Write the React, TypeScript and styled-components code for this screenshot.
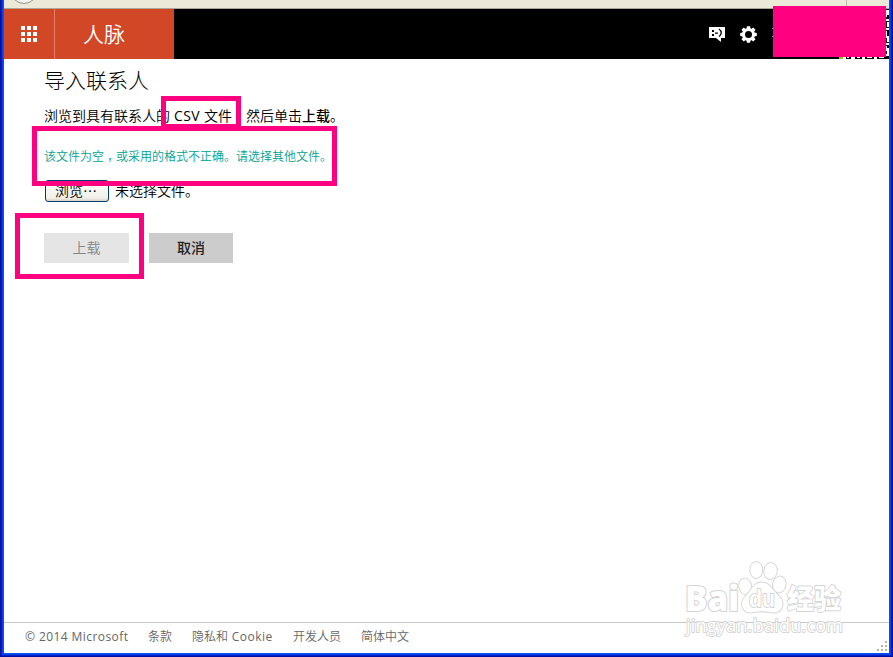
import React from "react";
import styled, { createGlobalStyle, css } from "styled-components";

const GlobalStyle = createGlobalStyle`
  *, *::before, *::after { box-sizing: border-box; }
  body {
    margin: 0;
    overflow: hidden;
    background: #fff;
    font-family: "Open Sans", "Noto Sans CJK SC", sans-serif;
  }
`;

const WindowFrame = styled.div`
  position: relative;
  display: flex;
  flex-direction: column;
  width: 893px;
  height: 657px;
  padding: 0 4px 4px;
  background: #fff;
  &::after {
    content: "";
    position: absolute;
    inset: -4px 0 0;
    pointer-events: none;
    box-shadow: inset 0 0 0 1px #0010a4, inset 0 0 0 2px #0020c8, inset 0 0 0 3px #0840e8,
      inset 0 0 0 4px #0850f0;
  }
`;

const BrowserChrome = styled.div`
  display: flex;
  justify-content: space-between;
  flex: 0 0 9px;
  overflow: hidden;
  background: #ece9d8;
  border-bottom: 1px solid #aaa796;
`;

const BackButtonEdge = styled.svg`
  display: block;
  width: 50px;
  height: 8px;
`;

const ChromeDivider = styled.span`
  width: 1px;
  height: 6px;
  margin-right: 42px;
  background: #bdb9a8;
`;

const Header = styled.header`
  display: flex;
  flex: 0 0 50px;
  background: #000;
`;

const AppLauncher = styled.button`
  display: grid;
  place-items: center;
  width: 51px;
  height: 50px;
  padding: 0;
  border: 0;
  border-right: 1px solid #e28067;
  background: #d24726;
`;

const AppName = styled.div`
  width: 119px;
  padding-left: 28px;
  background: #d24726;
  color: #fff;
  font-size: 21px;
  font-weight: 350;
  line-height: 50px;
`;

const HeaderTools = styled.div`
  display: flex;
  align-items: center;
  gap: 14px;
  margin-left: auto;
  padding-right: 132px;
`;

const Icon = styled.svg`
  display: block;
`;

const Content = styled.main`
  display: flex;
  flex-direction: column;
  flex: 1;
  padding: 6px 40px 0;
  white-space: pre;
`;

const Title = styled.h1`
  margin: 0;
  font-size: 21px;
  font-weight: 300;
  line-height: 30px;
`;

const Instruction = styled.p`
  display: flex;
  margin: 11px 0 0;
  font-size: 14px;
  font-weight: 350;
  line-height: 20px;
`;

const FileType = styled.span`
  display: inline-block;
  width: 76px;
  padding-left: 4px;
`;

const Latin = styled.span<{ $spacing?: number }>`
  font-weight: 400;
  letter-spacing: ${(p) => p.$spacing ?? 0}px;
`;

const Strong = styled.b`
  font-weight: 500;
`;

const CenteredComma = styled.span`
  display: inline-block;
  width: 12px;
  text-indent: 3px;
`;

const ErrorText = styled.p`
  margin: 21px 0 0;
  color: #00a294;
  font-size: 12px;
  font-weight: 350;
  line-height: 20px;
`;

const FileRow = styled.div`
  display: flex;
  align-items: center;
  gap: 6px;
  height: 24px;
  margin-top: 12px;
  padding-left: 1px;
  font-size: 14px;
  font-weight: 350;
  line-height: 20px;
`;

const BrowseButton = styled.button`
  width: 64px;
  height: 22px;
  padding: 0 2px 2px 0;
  border: 1px solid #003c74;
  border-radius: 3px;
  background: linear-gradient(#fff, #f1f0e8 85%, #d8d0c4);
  font: 350 14px/18px "Noto Sans CJK SC", sans-serif;
  color: #000;
`;

const Actions = styled.div`
  display: flex;
  gap: 20px;
  margin-top: 30px;
`;

const ActionButton = styled.button<{ $muted?: boolean }>`
  width: 84px;
  height: 30px;
  padding: 0 0 2px;
  border: 0;
  background: #ccc;
  color: #222;
  font: 500 14px/28px "Noto Sans CJK SC", sans-serif;
  ${(p) =>
    p.$muted &&
    css`
      width: 85px;
      background: #e5e5e5;
      color: #858585;
      font-weight: 350;
    `}
`;

const Footer = styled.footer`
  display: flex;
  flex: 0 0 31px;
  padding-left: 21px;
  border-top: 1px solid #c8c8c8;
  color: #666;
  font-size: 12px;
  font-weight: 350;
  line-height: 27px;
  white-space: pre;
`;

const FooterItem = styled.span<{ $width: number }>`
  width: ${(p) => p.$width}px;
`;

const Overlay = styled.div<{ $x: number; $y: number; $w: number; $h: number }>`
  position: absolute;
  z-index: 2;
  left: ${(p) => p.$x}px;
  top: ${(p) => p.$y}px;
  width: ${(p) => p.$w}px;
  height: ${(p) => p.$h}px;
  pointer-events: none;
`;

const Highlight = styled(Overlay)`
  border: 5px solid #ff0080;
`;

const Redaction = styled(Overlay)`
  background: #ff0080;
`;

const Watermark = () => (
  <Overlay $x={680} $y={555} $w={170} $h={85}>
    <Icon width="170" height="85" viewBox="0 0 170 85">
      <g fill="#fff" stroke="#d4d4d4" strokeWidth="2.2" paintOrder="stroke" strokeLinejoin="round">
        <text x="5" y="56" fontFamily="Open Sans, sans-serif" fontSize="36" fontWeight="800" textLength="54" lengthAdjust="spacingAndGlyphs">
          Bai
        </text>
        <g strokeWidth="1.8">
          <ellipse cx="65.3" cy="31.5" rx="6" ry="8" transform="rotate(-12 65.3 31.5)" />
          <ellipse cx="76.3" cy="15" rx="6" ry="8" />
          <ellipse cx="90.5" cy="16" rx="6.3" ry="8" transform="rotate(8 90.5 16)" />
          <ellipse cx="99.3" cy="29.5" rx="6.3" ry="8" transform="rotate(12 99.3 29.5)" />
          <path d="M82 27.5C89 27.5 91 33 96 38C101 43 104 46 102 52C100 58 94 58 90 57C84 56 80 56 74 57C67 59 62 55 62 49C62 43 67 40 70 36C73 32 75 27.5 82 27.5Z" />
        </g>
        <text x="69" y="52" fontFamily="Liberation Sans, sans-serif" fontSize="24" fontWeight="700" textLength="26" lengthAdjust="spacingAndGlyphs" stroke="#c8c8c8" strokeWidth="1.5">
          du
        </text>
        <text x="107" y="54" fontSize="27" fontWeight="900" fontFamily="Noto Sans CJK SC, sans-serif" textLength="54" strokeWidth="1.8">
          经验
        </text>
        <text x="6" y="77" fontSize="18" fontFamily="Open Sans, sans-serif" strokeWidth="1.8" textLength="157">
          jingyan.baidu.com
        </text>
      </g>
    </Icon>
  </Overlay>
);

const dots = [0, 6, 12];

export default function App() {
  return (
    <>
      <GlobalStyle />
      <WindowFrame>
        <BrowserChrome>
          <BackButtonEdge viewBox="0 0 50 8">
            <circle cx="20" cy="-10" r="13.5" fill="#f4f3ee" stroke="#929292" />
          </BackButtonEdge>
          <ChromeDivider />
        </BrowserChrome>
        <Header>
          <AppLauncher aria-label="应用">
            <Icon width="16" height="16" viewBox="0 0 16 16">
              {dots.map((y) => dots.map((x) => <rect key={`${x}-${y}`} x={x} y={y} width="4" height="4" fill="#fff" />))}
            </Icon>
          </AppLauncher>
          <AppName>人脉</AppName>
          <HeaderTools>
            <Icon width="17" height="16" viewBox="0 0 17 16">
              <path d="M0 1H16V12H12V16L7 12H0Z" fill="#fff" />
              <path d="M3 4h2v2H3zM3 8h2v2H3zM6 6.5h3v1.2H6z" fill="#000" />
              <path d="M10 3Q14.5 6.5 10 10.5" fill="none" stroke="#000" strokeWidth="1.3" />
            </Icon>
            <Icon width="17" height="17" viewBox="-8.5 -8.5 17 17">
              <circle r="5" fill="none" stroke="#fff" strokeWidth="3" />
              {[0, 45, 90, 135, 180, 225, 270, 315].map((a) => (
                <path key={a} d="M-2 -5.5L-1.6 -8.3H1.6L2 -5.5Z" fill="#fff" transform={`rotate(${a})`} />
              ))}
            </Icon>
          </HeaderTools>
        </Header>
        <Content>
          <Title>导入联系人</Title>
          <Instruction>
            浏览到具有联系人的
            <FileType>
              <Latin $spacing={0.4}>CSV </Latin>文件
            </FileType>
            然后单击<Strong>上载</Strong>。
          </Instruction>
          <ErrorText>
            该文件为空<CenteredComma>，</CenteredComma>或采用的格式不正确。请选择其他文件。
          </ErrorText>
          <FileRow>
            <BrowseButton>浏览⋯</BrowseButton>
            <span>未选择文件。</span>
          </FileRow>
          <Actions>
            <ActionButton $muted disabled>上载</ActionButton>
            <ActionButton>取消</ActionButton>
          </Actions>
        </Content>
        <Footer>
          <FooterItem $width={123}>
            <Latin $spacing={0.42}>© 2014 Microsoft</Latin>
          </FooterItem>
          <FooterItem $width={44}>条款</FooterItem>
          <FooterItem $width={101}>
            隐私和<Latin $spacing={0.5}> Cookie</Latin>
          </FooterItem>
          <FooterItem $width={68}>开发人员</FooterItem>
          <FooterItem $width={60}>简体中文</FooterItem>
        </Footer>
        <Highlight $x={161} $y={96} $w={80} $h={33} />
        <Highlight $x={32} $y={126} $w={305} $h={60} />
        <Highlight $x={15} $y={213} $w={129} $h={66} />
        <Overlay $x={771} $y={9} $w={118} $h={50}>
          <Icon width="118" height="50" viewBox="0 0 118 50" shapeRendering="crispEdges">
            <path d="M1 19h1v1H1zM1 27h1v1H1z" fill="#4f9cff" />
            <path d="M68 48h4v2h-4z" fill="#8fbe20" />
            <path
              d="M72 49h3M76 48h2M80 49h4M86 48h3M91 49h3M96 48h5M103 49h3M108 48h5M115 1v7M117 1v5M115 11h3M117 13v5M115 20h3M115 22v7M117 27v6M115 35h3M115 37v5M117 39v6M115 46h3"
              fill="none"
              stroke="#fff"
              strokeWidth="1.2"
            />
          </Icon>
        </Overlay>
        <Redaction $x={773} $y={6} $w={113} $h={51} />
        <Watermark />
        <Overlay $x={877} $y={641} $w={10} $h={10}>
          <Icon width="10" height="10" viewBox="0 0 10 10">
            <path d="M8 0h2v2H8zM4 4h2v2H4zM8 4h2v2H8zM0 8h2v2H0zM4 8h2v2H4zM8 8h2v2H8z" fill="#b8b4a2" />
          </Icon>
        </Overlay>
      </WindowFrame>
    </>
  );
}
